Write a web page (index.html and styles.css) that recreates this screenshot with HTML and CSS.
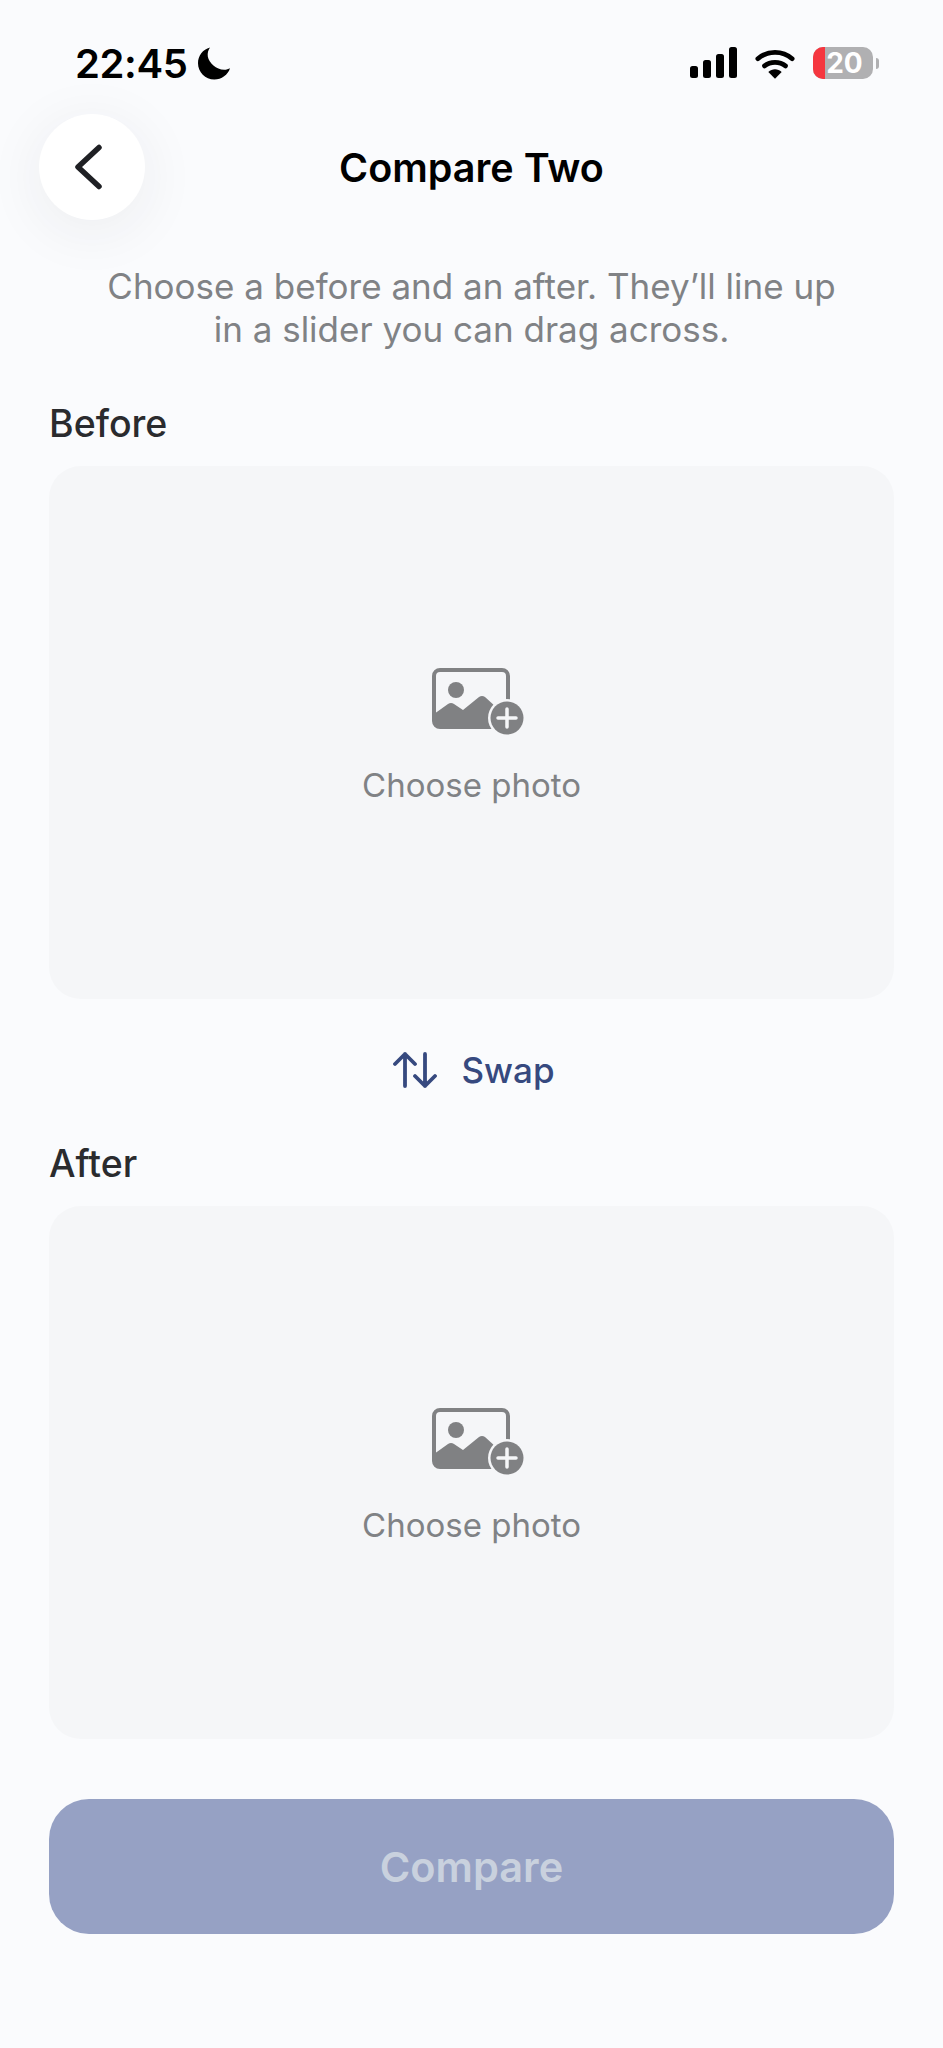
FILE: index.html
```html
<!DOCTYPE html>
<html lang="en">
<head>
<meta charset="utf-8">
<title>Compare Two</title>
<link rel="stylesheet" href="styles.css">
</head>
<body>
<main class="screen">
  <div class="status">
    <div class="status-left">
      <span class="time">22:45</span>
      <svg class="moon" viewBox="0 0 33 33"><path fill="#000" d="M12 0.500C4.800 2.300 0 8.800 0 16.200 0 25.200 7.300 32.500 16.300 32.500c7.300 0 13.600-4.700 15.700-11.300-1.500 0.900-3.600 1.500-5.800 1.500C18.200 22.700 11 15.900 9.800 9.500 9.300 6.200 10.300 2.800 12 0.500z"/></svg>
    </div>
    <div class="status-right">
      <svg class="signal" viewBox="0 0 48 32"><rect x="0" y="19" width="8" height="12" rx="2.500"/><rect x="13" y="13" width="8" height="18" rx="2.500"/><rect x="26" y="7" width="8" height="24" rx="2.500"/><rect x="39" y="0" width="8" height="31" rx="2.500"/></svg>
      <svg class="wifi" viewBox="0 0 42 32"><path d="M3 11C13 2 29 2 39 11" fill="none" stroke="#000" stroke-width="5" stroke-linecap="round"/><path d="M10 18.500C16 13.500 26 13.500 32 18.500" fill="none" stroke="#000" stroke-width="5" stroke-linecap="round"/><path d="M14 25c4-4 10-4 14 0l-7 7z" fill="#000"/></svg>
      <div class="battery">
        <span class="battery-level"></span>
        <span class="battery-text">20</span>
      </div>
      <span class="battery-cap"></span>
    </div>
  </div>

  <header class="nav">
    <button class="back" aria-label="Back">
      <svg viewBox="0 0 28 46" class="back-icon"><path d="M25 3.500 4 23l21 19.500" fill="none" stroke="#1f2024" stroke-width="5.500" stroke-linecap="round" stroke-linejoin="round"/></svg>
    </button>
    <h1 class="title">Compare Two</h1>
  </header>

  <p class="intro">Choose a before and an after. They’ll line up<br>in a slider you can drag across.</p>

  <h2 class="label">Before</h2>
  <div class="picker">
    <svg class="pic-icon" viewBox="0 0 92 68"><use href="#pic"/></svg>
    <span class="picker-text">Choose photo</span>
  </div>

  <div class="swap">
    <svg class="swap-icon" viewBox="0 0 44 38"><path d="M12 35V3M2 13 12 3l10 10M32 3v32M22 25l10 10 10-10" fill="none" stroke="#36497f" stroke-width="3.800" stroke-linecap="round" stroke-linejoin="round"/></svg>
    <span>Swap</span>
  </div>

  <h2 class="label">After</h2>
  <div class="picker">
    <svg class="pic-icon" viewBox="0 0 92 68"><use href="#pic"/></svg>
    <span class="picker-text">Choose photo</span>
  </div>

  <button class="compare">Compare</button>
</main>

<svg class="defs" aria-hidden="true">
  <defs>
    <g id="pic">
      <rect x="2" y="2" width="74" height="57" rx="6" fill="none" stroke="#808183" stroke-width="4"/>
      <path d="M2 46 16 36c2-1.500 4-1.500 6 0l9 6 16-13c2-1.500 4-1.500 6 0l22 20v5c0 3-2 5-5 5H7c-3 0-5-2-5-5z" fill="#808183"/>
      <circle cx="24" cy="22" r="8" fill="#808183"/>
      <circle cx="75" cy="50" r="19" fill="#f5f6f8"/>
      <circle cx="75" cy="50" r="16.500" fill="#808183"/>
      <path d="M75 41v18M66 50h18" stroke="#f5f6f8" stroke-width="3.500" stroke-linecap="round"/>
    </g>
  </defs>
</svg>
</body>
</html>
```

FILE: styles.css
```css
* { box-sizing: border-box; }
html, body { margin: 0; padding: 0; }
body {
  background: #fafbfd;
  font-family: Inter, "Liberation Sans", sans-serif;
}
.screen {
  width: 943px;
  height: 2048px;
  padding: 0 49px;
  overflow: hidden;
  position: relative;
}
.status {
  height: 114px;
  margin: 0 -49px;
  padding: 40px 64px 0 75px;
  display: flex;
  justify-content: space-between;
  align-items: flex-start;
}
.status-left { display: flex; align-items: center; gap: 11px; height: 46px; }
.time { font-size: 40px; font-weight: 600; color: #000; letter-spacing: -0.4px; }
.moon { width: 33px; height: 33px; }
.status-right { display: flex; align-items: center; height: 46px; }
.signal { width: 48px; height: 32px; }
.wifi { width: 40px; height: 31px; margin-left: 17px; }
.battery {
  width: 60px;
  height: 32px;
  margin-left: 18px;
  border-radius: 10px;
  background: #b0b0b2;
  overflow: hidden;
  position: relative;
  display: flex;
  align-items: center;
  justify-content: center;
}
.battery-level {
  position: absolute;
  left: 0; top: 0; bottom: 0;
  width: 12px;
  background: #f5363f;
}
.battery-text {
  position: relative;
  font-size: 28px;
  font-weight: 700;
  color: #fff;
  padding-left: 3px;
}
.battery-cap {
  width: 3px;
  height: 11px;
  margin-left: 3px;
  background: #b0b0b2;
  border-radius: 0 3px 3px 0;
}
.nav {
  height: 108px;
  display: flex;
  align-items: center;
  justify-content: center;
  position: relative;
}
.back {
  position: absolute;
  left: -10px;
  top: 0;
  width: 106px;
  height: 106px;
  border: 0;
  padding: 0;
  border-radius: 50%;
  background: #fff;
  box-shadow: 0 10px 60px rgba(40, 44, 60, 0.07);
  display: flex;
  align-items: center;
  justify-content: center;
}
.back-icon { width: 28px; height: 46px; margin-right: 8px; }
.title { margin: 0; font-size: 39.500px; font-weight: 600; color: #000; }
.intro {
  margin: 43px 0 0;
  font-size: 35px;
  line-height: 43px;
  color: #808285;
  text-align: center;
}
.label {
  margin: 51px 0 0;
  font-size: 37.500px;
  line-height: 44px;
  font-weight: 500;
  color: #2a2b2e;
}
.picker {
  margin-top: 20px;
  height: 533px;
  padding-top: 9px;
  border-radius: 32px;
  background: #f5f6f8;
  display: flex;
  flex-direction: column;
  align-items: center;
  justify-content: center;
}
.pic-icon { width: 92px; height: 68px; margin: 0 0 27px 13px; }
.picker-text { font-size: 33px; line-height: 44px; color: #808285; }
.swap {
  height: 142px;
  padding-left: 5px;
  display: flex;
  align-items: center;
  justify-content: center;
  gap: 24px;
  font-size: 35px;
  font-weight: 500;
  color: #36497f;
}
.swap-icon { width: 44px; height: 38px; }
.swap + .label { margin-top: 1px; }
.compare {
  display: block;
  width: 100%;
  height: 135px;
  margin-top: 60px;
  border: 0;
  border-radius: 40px;
  background: #96a1c4;
  color: #c9d1de;
  font-family: inherit;
  font-size: 41.500px;
  font-weight: 600;
}
.defs { position: absolute; width: 0; height: 0; }
```
